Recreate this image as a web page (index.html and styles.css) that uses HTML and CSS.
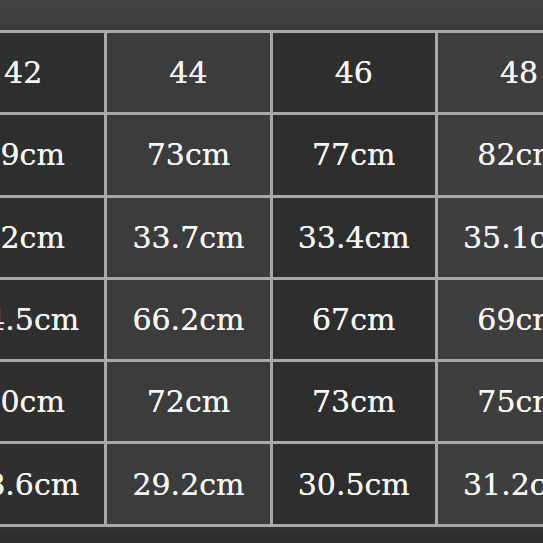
FILE: index.html
```html
<!DOCTYPE html>
<html>
<head>
<meta charset="utf-8">
<link rel="stylesheet" href="styles.css">
</head>
<body>
<div class="page">
  <div class="band-top"></div>
  <div class="chart">
    <div class="cell c1">42</div><div class="cell c2">44</div><div class="cell c3">46</div><div class="cell c4">48</div>
    <div class="cell c1">69cm</div><div class="cell c2">73cm</div><div class="cell c3">77cm</div><div class="cell c4">82cm</div>
    <div class="cell c1">32cm</div><div class="cell c2">33.7cm</div><div class="cell c3">33.4cm</div><div class="cell c4">35.1cm</div>
    <div class="cell c1">64.5cm</div><div class="cell c2">66.2cm</div><div class="cell c3">67cm</div><div class="cell c4">69cm</div>
    <div class="cell c1">70cm</div><div class="cell c2">72cm</div><div class="cell c3">73cm</div><div class="cell c4">75cm</div>
    <div class="cell c1">28.6cm</div><div class="cell c2">29.2cm</div><div class="cell c3">30.5cm</div><div class="cell c4">31.2cm</div>
  </div>
  <div class="band-bottom"></div>
</div>
</body>
</html>
```
FILE: styles.css
```css
html, body {
  margin: 0;
  padding: 0;
  background: #2a2a2a;
  overflow: hidden;
}
.page {
  width: 543px;
  height: 543px;
  overflow: hidden;
  display: flex;
  flex-direction: column;
}
.band-top {
  height: 30px;
  flex: none;
  background: linear-gradient(to bottom, #424242 0%, #3f3f3f 75%, #363636 100%);
}
.chart {
  flex: none;
  display: grid;
  grid-template-columns: repeat(4, 162.3px);
  grid-auto-rows: 79.3px;
  gap: 3px;
  padding: 3px;
  margin-left: -61px;
  width: max-content;
  background: #a8a8a8;
}
.cell {
  display: flex;
  align-items: center;
  justify-content: center;
  color: #f6f6f6;
  font-family: "DejaVu Serif", "Liberation Serif", serif;
  font-size: 30px;
  white-space: nowrap;
  overflow: hidden;
  text-shadow: 0 0 0.4px #f6f6f6;
}
.c1 { background: #2f2f2f; }
.c2 { background: #3c3c3c; }
.c3 { background: #2e2e2e; }
.c4 { background: #3e3e3e; }
.band-bottom {
  flex: 1;
  background: linear-gradient(to bottom, #333333 0%, #2c2c2c 100%);
}
```
